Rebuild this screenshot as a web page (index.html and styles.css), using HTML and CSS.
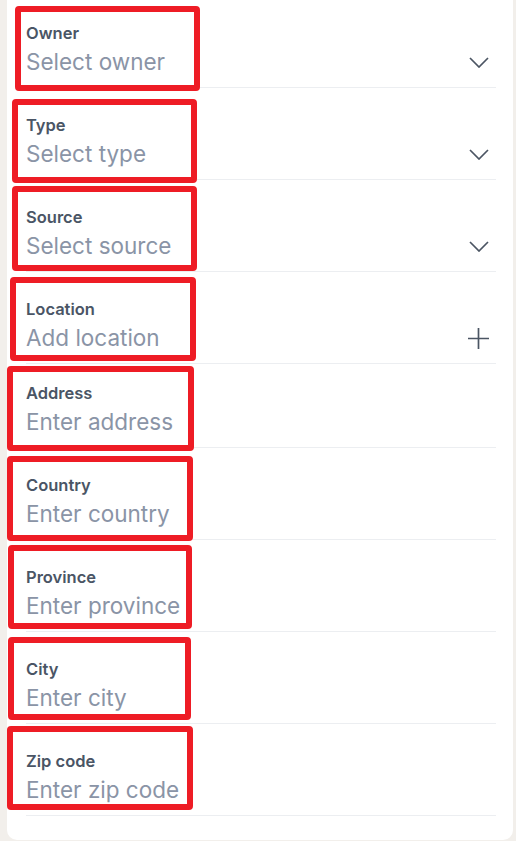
FILE: index.html
```html
<!DOCTYPE html>
<html lang="en">
<head>
<meta charset="utf-8">
<title>Contact details</title>
<link rel="stylesheet" href="styles.css">
</head>
<body>
<div class="card">
  <div class="row row-first">
    <div class="field"><div class="label">Owner</div><div class="ph">Select owner</div></div>
    <svg class="icon chevron" viewBox="0 0 20 11"><path d="M1 1l9 9 9-9"/></svg>
    <span class="mark m1"></span>
  </div>
  <div class="row">
    <div class="field"><div class="label">Type</div><div class="ph">Select type</div></div>
    <svg class="icon chevron" viewBox="0 0 20 11"><path d="M1 1l9 9 9-9"/></svg>
    <span class="mark m2"></span>
  </div>
  <div class="row">
    <div class="field"><div class="label">Source</div><div class="ph">Select source</div></div>
    <svg class="icon chevron" viewBox="0 0 20 11"><path d="M1 1l9 9 9-9"/></svg>
    <span class="mark m3"></span>
  </div>
  <div class="row">
    <div class="field"><div class="label">Location</div><div class="ph">Add location</div></div>
    <svg class="icon plus" viewBox="0 0 21 21"><path d="M10.5 0v21M0 10.5h21"/></svg>
    <span class="mark m4"></span>
  </div>
  <div class="row row-tight">
    <div class="field"><div class="label">Address</div><div class="ph">Enter address</div></div>
    <span class="mark m5"></span>
  </div>
  <div class="row">
    <div class="field"><div class="label">Country</div><div class="ph">Enter country</div></div>
    <span class="mark m6"></span>
  </div>
  <div class="row">
    <div class="field"><div class="label">Province</div><div class="ph">Enter province</div></div>
    <span class="mark m7"></span>
  </div>
  <div class="row">
    <div class="field"><div class="label">City</div><div class="ph">Enter city</div></div>
    <span class="mark m8"></span>
  </div>
  <div class="row">
    <div class="field"><div class="label">Zip code</div><div class="ph">Enter zip code</div></div>
    <span class="mark m9"></span>
  </div>
</div>
</body>
</html>
```

FILE: styles.css
```css
html, body {
  margin: 0;
  padding: 0;
}

body {
  background: #f2efeb;
  font-family: Inter, "Noto Sans", "Liberation Sans", sans-serif;
  height: 841px;
  overflow: hidden;
}

.card {
  margin: 0 3px 0 7px;
  background: #ffffff;
  border-radius: 0 0 10px 10px;
  padding: 0 17px 23px 19px;
  height: 817px;
}

.row {
  position: relative;
  display: flex;
  align-items: flex-end;
  justify-content: space-between;
  padding: 27px 0 11px;
  border-bottom: 1px solid #eceef1;
}

.row-first {
  padding-top: 23px;
}

.row-tight {
  padding-top: 19px;
}

.field {
  display: flex;
  flex-direction: column;
}

.label {
  font-size: 16.5px;
  line-height: 20px;
  font-weight: 600;
  color: #4a5565;
}

.ph {
  margin-top: 5px;
  font-size: 22.5px;
  line-height: 28px;
  font-weight: 400;
  color: #8a94a6;
}

.icon {
  fill: none;
  stroke: #4b5563;
  stroke-width: 1.7;
  margin-right: 7px;
}

.chevron {
  width: 20px;
  height: 11px;
  margin-bottom: 8px;
}

.plus {
  width: 21px;
  height: 21px;
  margin-bottom: 3px;
}

.mark {
  position: absolute;
  border: 6px solid #ee1c25;
  border-radius: 4px;
  box-sizing: border-box;
  pointer-events: none;
}

.m1 { left: -11px; top: 6px;  width: 185px; height: 85px; }
.m2 { left: -14px; top: 11px; width: 185px; height: 84px; }
.m3 { left: -14px; top: 6px;  width: 185px; height: 85px; }
.m4 { left: -16px; top: 5px;  width: 186px; height: 84px; }
.m5 { left: -19px; top: 2px;  width: 187px; height: 85px; }
.m6 { left: -19px; top: 8px;  width: 186px; height: 85px; }
.m7 { left: -18px; top: 5px;  width: 184px; height: 84px; }
.m8 { left: -18px; top: 5px;  width: 183px; height: 83px; }
.m9 { left: -19px; top: 2px;  width: 186px; height: 84px; }
```
